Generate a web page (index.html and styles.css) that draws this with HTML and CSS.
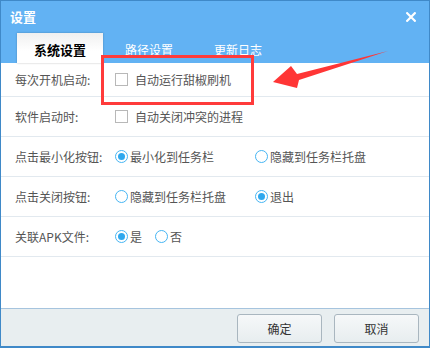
FILE: index.html
```html
<!DOCTYPE html>
<html lang="zh">
<head>
<meta charset="utf-8">
<link rel="stylesheet" href="styles.css">
</head>
<body>
<div class="window">
  <div class="titlebar">
    <div class="title-row">
      <span class="title">设置</span>
      <svg class="close" width="10" height="10" viewBox="0 0 10 10"><path d="M1.2 1.2 L8.8 8.8 M8.8 1.2 L1.2 8.8" stroke="#fff" stroke-width="2.2" stroke-linecap="square"/></svg>
    </div>
    <div class="tabs">
      <div class="tab active">系统设置</div>
      <div class="tab">路径设置</div>
      <div class="tab">更新日志</div>
    </div>
  </div>
  <div class="content">
    <div class="row first">
      <span class="label">每次开机启动:</span>
      <span class="opt"><span class="check"></span><span class="ctext">自动运行甜椒刷机</span></span>
    </div>
    <div class="row">
      <span class="label">软件启动时:</span>
      <span class="opt"><span class="check"></span><span class="ctext">自动关闭冲突的进程</span></span>
    </div>
    <div class="row">
      <span class="label">点击最小化按钮:</span>
      <span class="opt wide"><span class="radio on"></span><span class="rtext">最小化到任务栏</span></span>
      <span class="opt"><span class="radio"></span><span class="rtext">隐藏到任务栏托盘</span></span>
    </div>
    <div class="row">
      <span class="label">点击关闭按钮:</span>
      <span class="opt wide"><span class="radio"></span><span class="rtext">隐藏到任务栏托盘</span></span>
      <span class="opt"><span class="radio on"></span><span class="rtext">退出</span></span>
    </div>
    <div class="row">
      <span class="label">关联APK文件:</span>
      <span class="opt yes"><span class="radio on"></span><span class="rtext">是</span></span>
      <span class="opt"><span class="radio"></span><span class="rtext">否</span></span>
    </div>
  </div>
  <div class="footer">
    <button class="btn">确定</button>
    <button class="btn">取消</button>
  </div>
  <div class="highlight"></div>
  <svg class="arrow" width="430" height="348" viewBox="0 0 430 348"><polygon points="388,51 299,80 297,88 273,82 291,66 297,74" fill="#ff3636"/></svg>
</div>
</body>
</html>
```
FILE: styles.css
```css
* { box-sizing: border-box; }
body { margin: 0; font-family: "Noto Sans CJK SC", "Noto Sans", sans-serif; }
.window {
  position: relative;
  width: 430px;
  height: 348px;
  border: 1px solid #3f89c8;
  border-bottom-width: 2px;
  display: flex;
  flex-direction: column;
  background: #fff;
}
.titlebar {
  height: 62px;
  background: #62b2f3;
  display: flex;
  flex-direction: column;
}
.title-row {
  height: 32px;
  display: flex;
  align-items: center;
  justify-content: space-between;
  padding: 0 13px 0 9px;
}
.title { color: #fff; font-weight: bold; font-size: 13px; line-height: 16px; }
.close { display: block; }
.tabs {
  flex: 1;
  display: flex;
  gap: 3px;
  padding-left: 16px;
  align-items: stretch;
}
.tab {
  width: 86px;
  color: #fff;
  font-size: 12px;
  display: flex;
  align-items: center;
  justify-content: center;
  padding-top: 3px;
}
.tab.active {
  background: linear-gradient(#f0f0f0, #ffffff 60%);
  color: #000;
  font-weight: bold;
  font-size: 13px;
  box-shadow: 0 0 2px rgba(0,0,0,0.25);
}
.content { flex: 1; }
.row {
  height: 40px;
  border-bottom: 1px solid #e2e9ef;
  display: flex;
  align-items: center;
  padding-left: 14px;
  font-size: 12px;
  color: #555;
}
.row.first { height: 34px; }
.label { width: 100px; }
.opt { display: flex; align-items: center; }
.opt.wide { width: 140px; }
.opt.yes { width: 40px; }
.check {
  width: 13px; height: 13px;
  border: 1px solid #b8b8b8;
  background: #fff;
  margin-right: 7px;
}
.radio {
  width: 13px; height: 13px;
  border: 1.5px solid #45b5f3;
  border-radius: 50%;
  margin-right: 2px;
  position: relative;
}
.radio.on::after {
  content: "";
  position: absolute;
  left: 1.5px; top: 1.5px;
  width: 7px; height: 7px;
  border-radius: 50%;
  background: #2fa8ee;
}
.footer {
  height: 38px;
  border-top: 1px solid #a6c4de;
  background: #e8eef0;
  display: flex;
  justify-content: flex-end;
  align-items: flex-start;
  gap: 12px;
  padding: 5px 10px 0 0;
}
.btn {
  width: 85px;
  height: 29px;
  border: 1px solid #a9b6bf;
  border-radius: 3px;
  background: linear-gradient(#f6f8f9, #e7edef);
  font-family: "Noto Sans CJK SC", sans-serif;
  font-size: 12px;
  color: #333;
  padding: 0;
}
.highlight {
  position: absolute;
  left: 100px;
  top: 54px;
  width: 153px;
  height: 50px;
  border: 3px solid #ff3b3b;
}
.arrow { position: absolute; left: -1px; top: -1px; }
```
